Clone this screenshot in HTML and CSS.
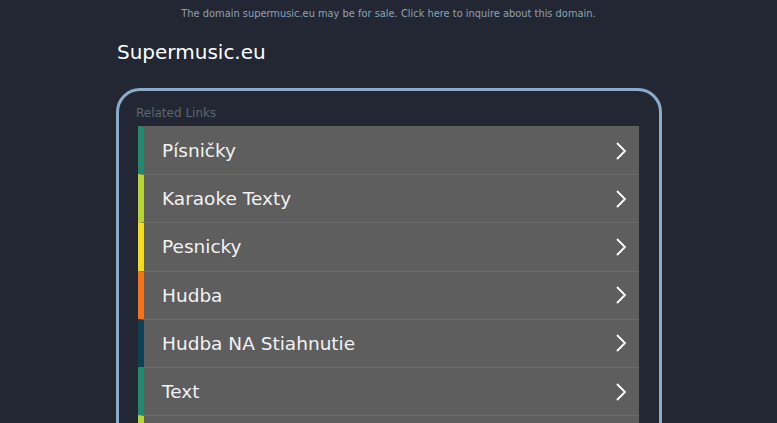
FILE: index.html
```html
<!DOCTYPE html>
<html lang="en">
<head>
    <meta charset="UTF-8">
    <meta name="viewport" content="width=device-width, initial-scale=1.0">
    <title>Supermusic.eu</title>
    <link rel="stylesheet" href="styles.css">
</head>
<body>
    <div class="sale-note">The domain supermusic.eu may be for sale. Click here to inquire about this domain.</div>
    <div class="wrap">
        <h1>Supermusic.eu</h1>
        <div class="links-box">
            <div class="links-title">Related Links</div>
            <ul class="links">
                <li class="c1"><span>Písničky</span><svg viewBox="0 0 12 20"><path d="M2 2 L10 10 L2 18"/></svg></li>
                <li class="c2"><span>Karaoke Texty</span><svg viewBox="0 0 12 20"><path d="M2 2 L10 10 L2 18"/></svg></li>
                <li class="c3"><span>Pesnicky</span><svg viewBox="0 0 12 20"><path d="M2 2 L10 10 L2 18"/></svg></li>
                <li class="c4"><span>Hudba</span><svg viewBox="0 0 12 20"><path d="M2 2 L10 10 L2 18"/></svg></li>
                <li class="c5"><span>Hudba NA Stiahnutie</span><svg viewBox="0 0 12 20"><path d="M2 2 L10 10 L2 18"/></svg></li>
                <li class="c1"><span>Text</span><svg viewBox="0 0 12 20"><path d="M2 2 L10 10 L2 18"/></svg></li>
                <li class="c2"><span></span><svg viewBox="0 0 12 20"><path d="M2 2 L10 10 L2 18"/></svg></li>
            </ul>
        </div>
    </div>
</body>
</html>
```

FILE: styles.css
```css
body {
    font-family: "DejaVu Sans", sans-serif;
    background-color: #222733;
    margin: 0;
    padding: 0;
    overflow: hidden;
}
.sale-note {
    text-align: center;
    color: #8ea2b4;
    font-size: 9.85px;
    padding-top: 8px;
    height: 18px;
}
.wrap {
    width: 546px;
    margin-left: 116px;
}
h1 {
    margin: 12px 0 0 1px;
    color: #fff;
    font-size: 20px;
    font-weight: normal;
    line-height: 28px;
    height: 50px;
}
.links-box {
    border: 3px solid #8aabca;
    border-radius: 24px;
    padding: 14px 20px 0 19px;
    height: 400px;
}
.links-title {
    color: #5d6570;
    font-size: 12px;
    line-height: 16px;
    margin: 0 0 5px -2px;
}
.links {
    list-style: none;
    margin: 0;
    padding: 0;
}
.links li {
    display: flex;
    align-items: center;
    justify-content: space-between;
    height: 47.2px;
    background-color: #5e5e5e;
    border-left: 6px solid #1f8a6f;
    border-top: 1px solid #6a6a6a;
    padding: 0 12px 0 18px;
    color: #f2f2f2;
    font-size: 18.5px;
}
.links li:first-child {
    border-top-color: #5e5e5e;
}
.links li.c2 { border-left-color: #b8d433; }
.links li.c3 { border-left-color: #f5dd1c; }
.links li.c4 { border-left-color: #f47316; }
.links li.c5 { border-left-color: #0f3f52; }
.links svg {
    width: 12px;
    height: 20px;
    fill: none;
    stroke: #fff;
    stroke-width: 1.8;
}
```
